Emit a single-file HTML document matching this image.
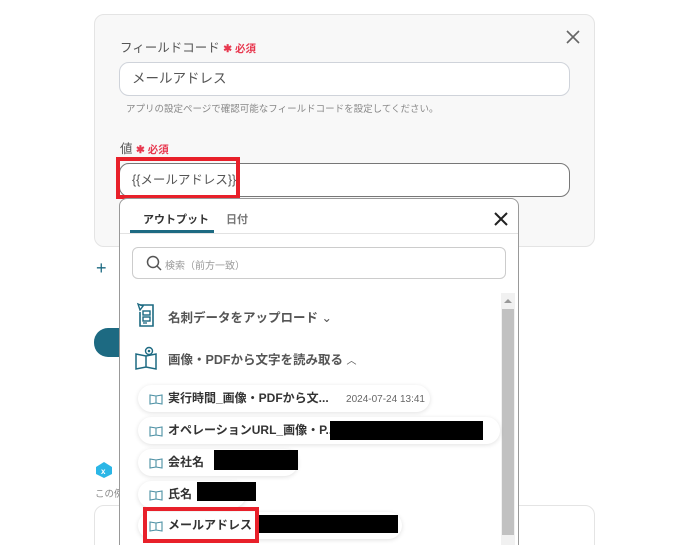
<!DOCTYPE html>
<html style="width:674px;height:545px;overflow:hidden"><head><meta charset="utf-8"><style>
*{margin:0;padding:0;box-sizing:border-box}
body{width:674px;height:545px;overflow:hidden;background:#fff;font-family:"Liberation Sans","Noto Sans CJK JP",sans-serif;position:relative;color:#444}
.a{position:absolute}
.card{left:94px;top:14px;width:501px;height:233px;background:#f8f8f8;border:1px solid #e4e4e4;border-radius:10px}
.lbl{font-size:12.5px;color:#555}
.req{color:#e8384f;font-size:10.5px;font-weight:bold}
.inp{left:119px;width:451px;height:34px;background:#fff;border:1px solid #cfd3da;border-radius:10px;font-size:13.5px;color:#555;padding-left:12px;line-height:32px}
.dd{left:119px;top:198px;width:400px;height:360px;background:#fff;border:1px solid #999;border-radius:8px}
.pill{left:138px;height:27px;background:#fff;border-radius:14px;box-shadow:0 1px 5px rgba(0,0,0,.12);font-size:12px;font-weight:bold;color:#333;line-height:27px;padding-left:30px}
.blk{background:#000}
</style></head><body>
<div class="a card"></div>
<svg class="a" style="left:566px;top:30px" width="14" height="14"><path d="M1 1L13 13M13 1L1 13" stroke="#666" stroke-width="1.6"/></svg>
<div class="a lbl" style="left:120px;top:37px">フィールドコード <span class="req">✱ 必須</span></div>
<div class="a inp" style="top:62px">メールアドレス</div>
<div class="a" style="left:126px;top:101px;font-size:9.5px;color:#888">アプリの設定ページで確認可能なフィールドコードを設定してください。</div>
<div class="a lbl" style="left:120px;top:138px">値 <span class="req">✱ 必須</span></div>
<div class="a inp" style="top:163px;border-color:#777;font-size:12.5px">{{メールアドレス}}</div>
<div class="a" style="left:116px;top:157px;width:124px;height:42px;border:4px solid #e8202a"></div>
<div class="a" style="left:96px;top:258px;font-size:18px;color:#1d6a82">+</div>
<div class="a" style="left:94px;top:328px;width:40px;height:29px;background:#1d6a82;border-radius:14px"></div>
<svg class="a" style="left:95px;top:461px" width="18" height="18"><path d="M9 1L17 6V13L9 17L1 13V6Z" fill="#2bb6e6"/><text x="6" y="13" font-size="8" fill="#fff" font-weight="bold">x</text></svg>
<div class="a" style="left:95px;top:486px;font-size:9.5px;color:#888">この例</div>
<div class="a" style="left:94px;top:505px;width:501px;height:60px;border:1px solid #e4e4e4;border-radius:10px"></div>
<div class="a dd">
<div class="a" style="left:23px;top:12px;font-size:11px;font-weight:bold;color:#333">アウトプット</div>
<div class="a" style="left:106px;top:12px;font-size:11px;font-weight:bold;color:#777">日付</div>
<div class="a" style="left:10px;top:31px;width:84px;height:3px;background:#1d6a82"></div>
<div class="a" style="left:0;top:34px;width:398px;height:1px;background:#e2e2e2"></div>
<svg class="a" style="left:374px;top:13px" width="14" height="14"><path d="M1 1L13 13M13 1L1 13" stroke="#222" stroke-width="2"/></svg>
<div class="a" style="left:12px;top:48px;width:374px;height:32px;border:1px solid #ccc;border-radius:6px"></div>
<svg class="a" style="left:26px;top:56px" width="16" height="16"><circle cx="7" cy="7" r="5.5" fill="none" stroke="#555" stroke-width="1.5"/><path d="M11 11L15 15" stroke="#555" stroke-width="1.5"/></svg>
<div class="a" style="left:45px;top:58px;font-size:10px;color:#999">検索（前方一致）</div>
<div class="a" style="left:381px;top:94px;width:14px;height:270px;background:#f1f1f1"></div>
<div class="a" style="left:382px;top:110px;width:12px;height:226px;background:#c1c1c1"></div>
<svg class="a" style="left:384px;top:99px" width="8" height="6"><path d="M0 5L4 1L8 5Z" fill="#999"/></svg>
<svg class="a" style="left:14px;top:103px" width="22" height="26"><path d="M6 3H19V24H6V10" fill="none" stroke="#1d6a82" stroke-width="1.6"/><path d="M4 2L9 4L6 8Z" fill="none" stroke="#1d6a82" stroke-width="1.4"/><rect x="9" y="9" width="7" height="4" fill="none" stroke="#1d6a82" stroke-width="1.4"/><rect x="9" y="15" width="7" height="4" fill="none" stroke="#1d6a82" stroke-width="1.4"/><path d="M9 21H13" stroke="#1d6a82" stroke-width="1.3"/></svg>
<div class="a" style="left:48px;top:108px;font-size:12.5px;font-weight:bold;color:#555">名刺データをアップロード <span style="font-weight:normal">⌄</span></div>
<svg class="a" style="left:14px;top:147px" width="24" height="26"><path d="M2 8V23L12 21L22 23V8L12 10Z M12 10V21" fill="none" stroke="#1d6a82" stroke-width="1.5"/><circle cx="15" cy="5" r="3.5" fill="none" stroke="#1d6a82" stroke-width="1.4"/><circle cx="15" cy="5" r="1.3" fill="#1d6a82"/></svg>
<div class="a" style="left:48px;top:150px;font-size:12.5px;font-weight:bold;color:#555">画像・PDFから文字を読み取る <span style="font-weight:normal;font-size:10px">︿</span></div>
</div>
<div class="a pill" style="top:385px;width:292px">実行時間_画像・PDFから文... <span style="font-weight:normal;font-size:10px;color:#666;margin-left:14px">2024-07-24 13:41</span></div>
<div class="a pill" style="top:417px;width:362px">オペレーションURL_画像・P...</div>
<div class="a pill" style="top:449px;width:160px">会社名</div>
<div class="a pill" style="top:481px;width:108px">氏名</div>
<div class="a pill" style="top:512px;width:264px">メールアドレス</div>
<div class="a blk" style="left:330px;top:421px;width:153px;height:19px"></div>
<div class="a blk" style="left:214px;top:450px;width:84px;height:20px"></div>
<div class="a blk" style="left:197px;top:482px;width:59px;height:19px"></div>
<div class="a blk" style="left:255px;top:515px;width:143px;height:18px"></div>
<div class="a" style="left:143px;top:507px;width:116px;height:36px;border:4px solid #e8202a"></div>
<svg class="a" style="left:149px;top:391px" width="14" height="120"><g fill="none" stroke="#4b8fa3" stroke-width="1.1"><path d="M1 4V13L7 12L13 13V4L7 5Z M7 5V12"/><path d="M1 36V45L7 44L13 45V36L7 37Z M7 37V44"/><path d="M1 68V77L7 76L13 77V68L7 69Z M7 69V76"/><path d="M1 100V109L7 108L13 109V100L7 101Z M7 101V108"/></g></svg>
<svg class="a" style="left:149px;top:518px" width="14" height="16"><path d="M1 4V13L7 12L13 13V4L7 5Z M7 5V12" fill="none" stroke="#4b8fa3" stroke-width="1.1"/></svg>
</body></html>
